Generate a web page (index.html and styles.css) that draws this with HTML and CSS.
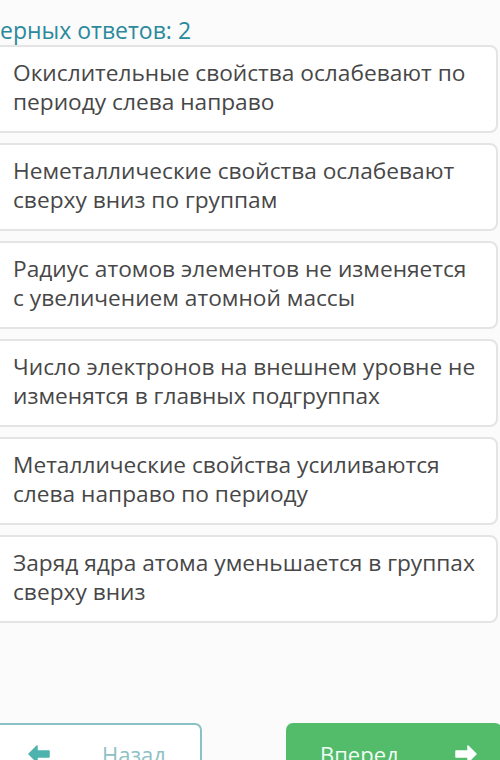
FILE: index.html
```html
<!DOCTYPE html>
<html lang="ru">

<head>
    <meta charset="UTF-8">
    <meta name="viewport" content="width=device-width, initial-scale=1.0">
    <title>Тест</title>
    <link rel="stylesheet" href="styles.css">
</head>

<body>
    <div class="page">
        <div class="score">ерных ответов: 2</div>

        <div class="answers">
            <div class="answer">Окислительные свойства ослабевают по периоду слева направо</div>
            <div class="answer">Неметаллические свойства ослабевают сверху вниз по группам</div>
            <div class="answer">Радиус атомов элементов не изменяется с увеличением атомной массы</div>
            <div class="answer">Число электронов на внешнем уровне не изменятся в главных подгруппах</div>
            <div class="answer">Металлические свойства усиливаются слева направо по периоду</div>
            <div class="answer">Заряд ядра атома уменьшается в группах сверху вниз</div>
        </div>

        <div class="nav">
            <button class="btn btn-back">
                <svg class="arrow" width="22" height="18" viewBox="0 0 22 18">
                    <path d="M9 1 L1 9 L9 17 L9 12 L21 12 L21 6 L9 6 Z" fill="#4fb3ad" stroke="#4fb3ad" stroke-width="1.5" stroke-linejoin="round" />
                </svg>
                <span>Назад</span>
            </button>
            <button class="btn btn-next">
                <span>Вперед</span>
                <svg class="arrow" width="22" height="18" viewBox="0 0 22 18">
                    <path d="M13 1 L21 9 L13 17 L13 12 L1 12 L1 6 L13 6 Z" fill="#fff" stroke="#fff" stroke-width="1.5" stroke-linejoin="round" />
                </svg>
            </button>
        </div>
    </div>
</body>

</html>
```

FILE: styles.css
```css
body {
    font-family: "Open Sans", "Noto Sans", sans-serif;
    margin: 0;
    padding: 0;
    background-color: #fbfbfb;
    overflow: hidden;
}

.page {
    margin-left: -20px;
    width: 518px;
}

.score {
    margin-left: 20px;
    padding-top: 15px;
    font-size: 23px;
    line-height: 30px;
    color: #2a8a9c;
}

.answers {
    display: flex;
    flex-direction: column;
    gap: 10px;
    margin-top: 0;
}

.answer {
    background-color: #fff;
    border: 2px solid #e4e4e4;
    border-radius: 8px;
    padding: 11px 18px 15px 31px;
    min-height: 58px;
    font-size: 22.7px;
    line-height: 29px;
    color: #474747;
}

.nav {
    display: flex;
    justify-content: space-between;
    margin-top: 100px;
    margin-right: -4px;
}

.btn {
    display: flex;
    align-items: center;
    height: 62px;
    border-radius: 7px;
    font-family: inherit;
    font-size: 22px;
    padding: 0;
    cursor: pointer;
}

.btn-back {
    width: 222px;
    background-color: #fff;
    border: 2px solid #88c2c4;
    color: #8ec1c4;
}

.btn-back .arrow {
    margin-left: 46px;
    margin-right: 52px;
}

.btn-next {
    width: 216px;
    background-color: #52bc6b;
    border: none;
    color: #f2fbf4;
}

.btn-next span {
    margin-left: 34px;
    margin-right: 56px;
}
```
